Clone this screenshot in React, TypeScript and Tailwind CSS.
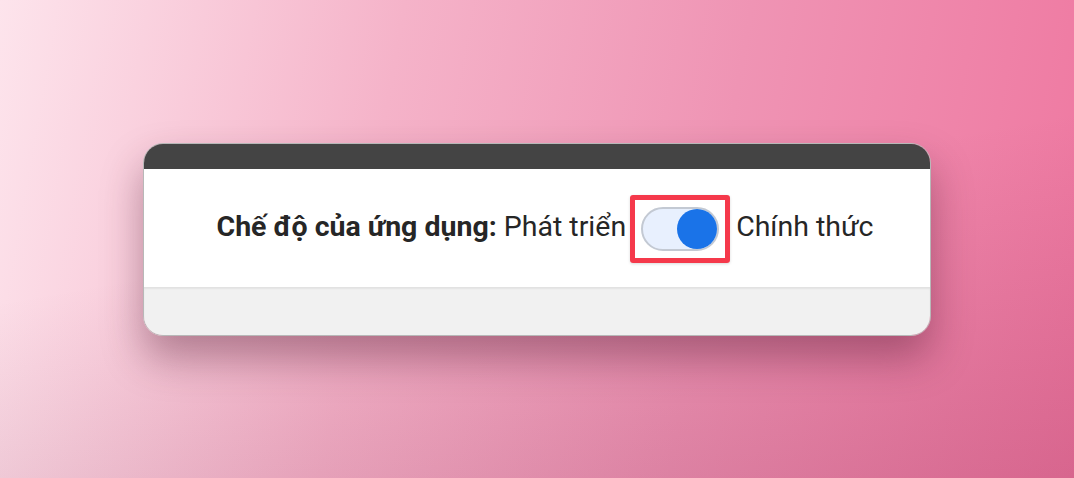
import React from 'react';

export default function App() {
    return (
        <div className="relative w-full h-[478px] overflow-hidden flex items-center justify-center bg-[linear-gradient(100deg,#fde4ec_0%,#f5b3c9_35%,#ef94b4_65%,#ef77a0_100%)]">
            {/* darker lower-right shading */}
            <div className="absolute inset-0 bg-[linear-gradient(170deg,rgba(0,0,0,0)_45%,rgba(110,20,60,0.18)_100%)]"></div>

            {/* Window card */}
            <div className="relative w-[788px] rounded-[20px] overflow-hidden border border-[#b8b8b8] shadow-[0_22px_40px_rgba(70,15,40,0.38)] font-['Roboto',sans-serif]">
                <div className="h-[25px] bg-[#444444]"></div>

                <div className="h-[118px] bg-white flex items-center justify-center pl-[16px]">
                    <div className="flex items-center text-[28.5px] text-[#262626] leading-none">
                        <span className="font-bold">Chế độ của ứng dụng:</span>
                        <span className="ml-[7px]">Phát triển</span>

                        {/* highlighted toggle */}
                        <div className="ml-[4px] mr-[6px] mt-[3px] border-[5px] border-[#f5394b] rounded-[3px] px-[6px] py-[7px] shadow-[0_1px_3px_rgba(0,0,0,0.15)]">
                            <div className="w-[78px] h-[44px] rounded-full bg-[#e8f0fe] border-2 border-[#c3c9d3] flex items-center justify-end">
                                <div className="w-[40px] h-[40px] rounded-full bg-[#1a73e8]"></div>
                            </div>
                        </div>

                        <span>Chính thức</span>
                    </div>
                </div>

                <div className="h-[48px] bg-[#f1f1f1] border-t border-[#e2e2e2] shadow-[inset_0_1px_2px_rgba(0,0,0,0.06)]"></div>
            </div>
        </div>
    );
}
